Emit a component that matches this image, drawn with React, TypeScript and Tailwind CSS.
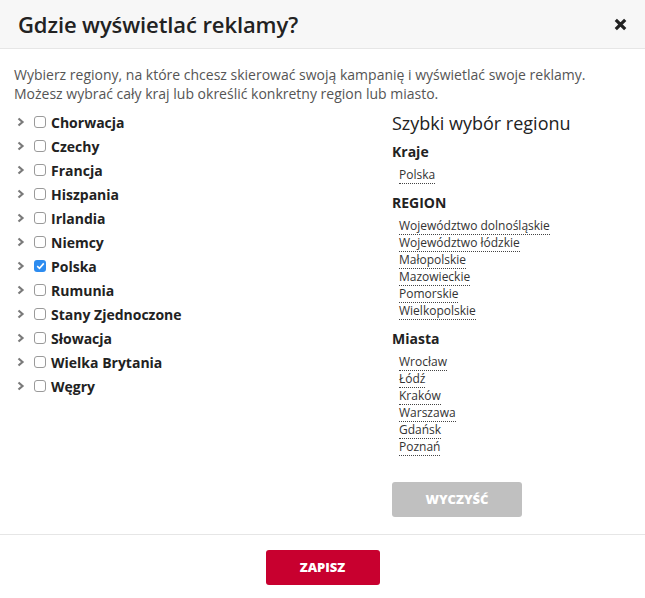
import React, { useState } from "react";

const COUNTRIES = [
  "Chorwacja",
  "Czechy",
  "Francja",
  "Hiszpania",
  "Irlandia",
  "Niemcy",
  "Polska",
  "Rumunia",
  "Stany Zjednoczone",
  "Słowacja",
  "Wielka Brytania",
  "Węgry",
];

const GROUPS: { title: string; items: string[] }[] = [
  { title: "Kraje", items: ["Polska"] },
  {
    title: "REGION",
    items: [
      "Województwo dolnośląskie",
      "Województwo łódzkie",
      "Małopolskie",
      "Mazowieckie",
      "Pomorskie",
      "Wielkopolskie",
    ],
  },
  { title: "Miasta", items: ["Wrocław", "Łódź", "Kraków", "Warszawa", "Gdańsk", "Poznań"] },
];

function Chevron() {
  return (
    <svg width="8" height="10" viewBox="0 0 8 10" className="shrink-0">
      <path d="M1.5 1.5 L5.5 5 L1.5 8.5" fill="none" stroke="#7a7a7a" strokeWidth="2.2" />
    </svg>
  );
}

function Checkbox({ checked }: { checked: boolean }) {
  if (checked) {
    return (
      <span className="w-[12px] h-[12px] rounded-[3px] bg-[#2d8cf0] flex items-center justify-center shrink-0">
        <svg width="9" height="8" viewBox="0 0 9 8">
          <path d="M1.2 4.2 L3.5 6.3 L7.8 1.4" fill="none" stroke="#fff" strokeWidth="1.6" />
        </svg>
      </span>
    );
  }
  return <span className="w-[12px] h-[12px] rounded-[3px] border border-[#9a9a9a] bg-white shrink-0" />;
}

export default function App() {
  const [selected] = useState<string[]>(["Polska"]);

  return (
    <div
      className="w-[645px] h-[598px] bg-white text-[#333] flex flex-col"
      style={{ fontFamily: '"Open Sans", "Noto Sans", sans-serif' }}
    >
      <div className="h-[49px] bg-[#f7f7f7] border-b border-[#e6e6e6] flex items-center justify-between pl-[18px] pr-[18px] shrink-0">
        <h1 className="text-[22px] font-semibold text-[#222] tracking-[-0.1px]">Gdzie wyświetlać reklamy?</h1>
        <svg width="13" height="13" viewBox="0 0 13 13">
          <path d="M1.8 1.8 L11.2 11.2 M11.2 1.8 L1.8 11.2" stroke="#222" strokeWidth="3.2" />
        </svg>
      </div>

      <div className="flex-1 px-[14px] pt-[16px]">
        <p className="text-[14px] leading-[19px] text-[#555]">
          Wybierz regiony, na które chcesz skierować swoją kampanię i wyświetlać swoje reklamy.
          <br />
          Możesz wybrać cały kraj lub określić konkretny region lub miasto.
        </p>

        <div className="flex mt-[7px]">
          <ul className="w-[378px]">
            {COUNTRIES.map((c) => (
              <li key={c} className="h-[24px] flex items-center">
                <span className="ml-[3px] mr-[9px] flex">
                  <Chevron />
                </span>
                <Checkbox checked={selected.includes(c)} />
                <span className="ml-[5px] text-[14px] font-bold text-[#222]">{c}</span>
              </li>
            ))}
          </ul>

          <div className="flex-1">
            <h2 className="text-[18px] leading-[24px] text-[#222] mt-[1px]">Szybki wybór regionu</h2>
            {GROUPS.map((g, gi) => (
              <div key={g.title} className={gi === 0 ? "mt-[7px]" : "mt-[9px]"}>
                <div className="text-[14px] font-bold text-[#222] leading-[20px]">{g.title}</div>
                <ul className="mt-[5px] pl-[7px]">
                  {g.items.map((it) => (
                    <li key={it} className="h-[17px] flex items-start leading-[16px]">
                      <span className="text-[12px] leading-[16px] text-[#333] border-b border-dotted border-[#444]">
                        {it}
                      </span>
                    </li>
                  ))}
                </ul>
              </div>
            ))}
            <button className="mt-[26px] w-[130px] h-[35px] rounded-[3px] bg-[#c0c0c0] text-white text-[13px] font-extrabold uppercase">
              Wyczyść
            </button>
          </div>
        </div>
      </div>

      <div className="h-[64px] border-t border-[#e6e6e6] flex items-start justify-center pt-[15px] shrink-0">
        <button className="w-[114px] h-[35px] rounded-[3px] bg-[#c8002f] text-white text-[13px] font-extrabold uppercase">
          Zapisz
        </button>
      </div>
    </div>
  );
}
